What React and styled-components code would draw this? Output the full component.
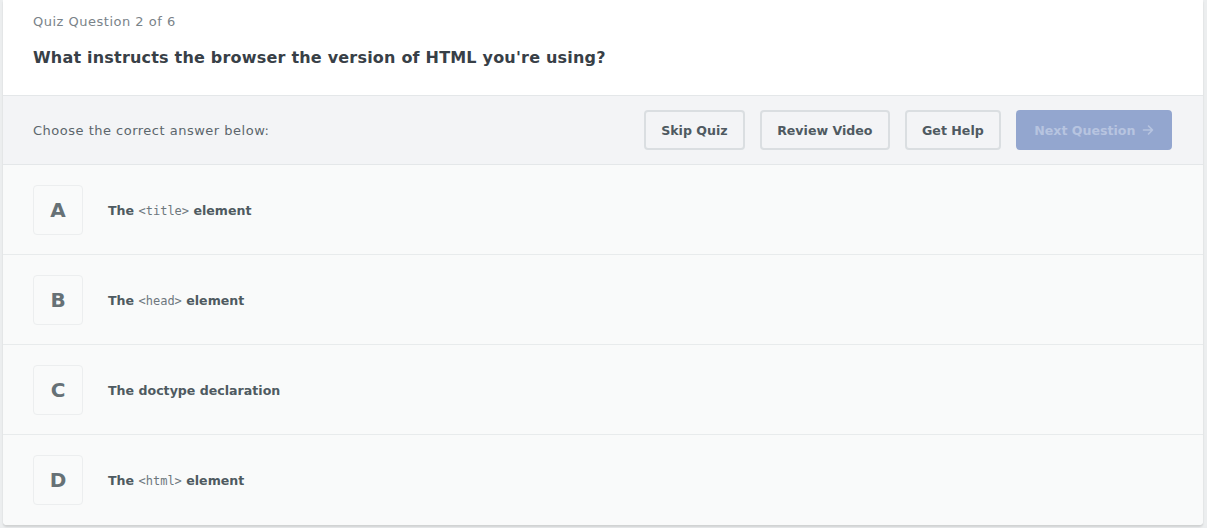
import React from "react";
import styled, { createGlobalStyle } from "styled-components";

const Global = createGlobalStyle`
  html, body { margin: 0; padding: 0; background: #eceeef; }
  body { font-family: "DejaVu Sans", "Open Sans", sans-serif; -webkit-font-smoothing: antialiased; }
  * { box-sizing: border-box; }
`;

const Page = styled.div`
  padding: 0 4px 4px 3px;
`;

const Card = styled.div`
  width: 1200px;
  background: #fff;
  border-radius: 0 0 4px 4px;
  box-shadow: 0 2px 2px rgba(0, 0, 0, 0.12);
  overflow: hidden;
`;

const Header = styled.div`
  height: 96px;
  padding: 12px 30px 0;
  border-bottom: 1px solid #e4e7e9;
`;

const Counter = styled.div`
  font-size: 13px;
  letter-spacing: 0.5px;
  color: #7a8389;
  line-height: 19px;
`;

const Question = styled.h1`
  margin: 16px 0 0;
  font-size: 16px;
  font-weight: 600;
  letter-spacing: 0.2px;
  color: #384047;
  line-height: 22px;
`;

const Toolbar = styled.div`
  height: 69px;
  display: flex;
  align-items: center;
  justify-content: space-between;
  padding: 0 31px 0 30px;
  background: #f3f4f6;
  border-bottom: 1px solid #e4e7e9;
`;

const Prompt = styled.div`
  font-size: 13px;
  letter-spacing: 0.5px;
  color: #5c666c;
`;

const Actions = styled.div`
  display: flex;
  gap: 14.5px;
`;

const Button = styled.button`
  height: 40px;
  padding: 0 ${(p) => p.$pad || 15.5}px;
  border: 2px solid ${(p) => (p.$primary ? "#93a6cf" : "#dadee1")};
  background: ${(p) => (p.$primary ? "#93a6cf" : "transparent")};
  color: ${(p) => (p.$primary ? "#b7c4e0" : "#4f5a61")};
  border-radius: 4px;
  font-family: inherit;
  font-size: 12.6px;
  font-weight: 700;
  display: flex;
  align-items: center;
  gap: 6px;
  cursor: pointer;
`;

const Answers = styled.div`
  background: #f9fafa;
`;

const Row = styled.div`
  height: 90px;
  display: flex;
  align-items: center;
  padding: 0 30px;
  gap: 25px;
  border-bottom: ${(p) => (p.$last ? "none" : "1px solid #e8ebec")};
`;

const Letter = styled.div`
  width: 50px;
  height: 50px;
  border: 1px solid #eceeef;
  border-radius: 4px;
  display: flex;
  align-items: center;
  justify-content: center;
  font-size: 20px;
  font-weight: 700;
  color: #667176;
`;

const Text = styled.div`
  font-size: 12.6px;
  font-weight: 700;
  color: #4f5a61;
  padding-top: 1px;
`;

const Code = styled.code`
  font-family: "DejaVu Sans Mono", monospace;
  font-size: 12px;
  font-weight: 400;
  color: #6d777d;
`;

const answers = [
  { l: "A", pre: "The ", code: "<title>", post: " element" },
  { l: "B", pre: "The ", code: "<head>", post: " element" },
  { l: "C", pre: "The doctype declaration" },
  { l: "D", pre: "The ", code: "<html>", post: " element" },
];

export default function App() {
  return (
    <Page>
      <Global />
      <Card>
        <Header>
          <Counter>Quiz Question 2 of 6</Counter>
          <Question>What instructs the browser the version of HTML you're using?</Question>
        </Header>
        <Toolbar>
          <Prompt>Choose the correct answer below:</Prompt>
          <Actions>
            <Button>Skip Quiz</Button>
            <Button>Review Video</Button>
            <Button>Get Help</Button>
            <Button $primary $pad={16.5}>
              Next Question
              <svg width="12" height="12" viewBox="0 0 12 12" fill="none" stroke="currentColor" strokeWidth="1.6" strokeLinecap="round" strokeLinejoin="round">
                <path d="M1.5 6h9M6.5 2l4 4-4 4" />
              </svg>
            </Button>
          </Actions>
        </Toolbar>
        <Answers>
          {answers.map((a, i) => (
            <Row key={a.l} $last={i === answers.length - 1}>
              <Letter>{a.l}</Letter>
              <Text>
                {a.pre}
                {a.code && <Code>{a.code}</Code>}
                {a.post}
              </Text>
            </Row>
          ))}
        </Answers>
      </Card>
    </Page>
  );
}
